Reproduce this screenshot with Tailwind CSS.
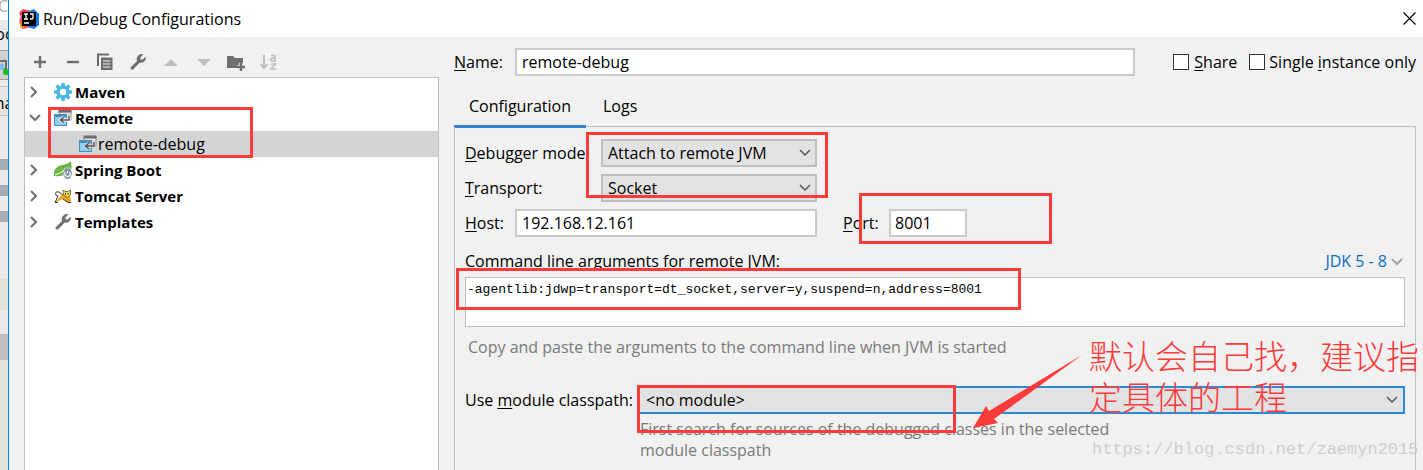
<!DOCTYPE html>
<html lang="en">
<head>
    <meta charset="UTF-8">
    <meta name="viewport" content="width=device-width, initial-scale=1.0">
    <script src="https://cdn.jsdelivr.net/npm/@tailwindcss/browser@4"></script>
    <title>Run/Debug Configurations</title>
</head>
<body class="relative flex min-h-screen overflow-hidden bg-[#f1f1f1] font-['Open_Sans','Noto_Sans_CJK_SC',sans-serif] text-base leading-6 text-black">

    <!-- Strip of the IDE window behind the dialog -->
    <div class="flex w-2 shrink-0 flex-col overflow-hidden bg-[#ece9e8]" aria-hidden="true">
        <div class="flex h-5 justify-end bg-white leading-3 text-[#aaaaaa]">C</div>
        <div class="flex h-[30px] justify-center bg-[#e9e9e9] pt-[2px]">oc</div>
        <div class="h-[30px] border-y border-[#a0a0a0] bg-[#d0d0d0] pt-2">
            <svg class="h-4 w-2" viewBox="0 0 8 16"><path d="M0 2h6v8H0" fill="none" stroke="#6e6e6e" stroke-width="2"/><rect y="5" width="4" height="6" fill="#7fc1e6"/><circle cx="6" cy="13" r="3" fill="#12c312"/></svg>
        </div>
        <div class="mt-[6px] flex h-[30px] justify-center border-y border-[#c0c0c0] bg-[#e4e4e4] pt-[4px]">na</div>
        <div class="mt-[43px] h-[11px] bg-[#a3adb3]"></div>
        <div class="mt-[15px] h-[11px] bg-[#a3adb3]"></div>
        <div class="mt-[15px] h-[11px] bg-[#a3adb3]"></div>
        <div class="mt-[56px] h-8 bg-[#dfe2d6]"></div>
        <div class="mt-[24px] h-[26px] bg-[#c3bdc1]"></div>
        <div class="grow bg-[#e0e4d8]"></div>
    </div>

    <!-- Dialog -->
    <div class="flex min-w-0 flex-1 flex-col border-l border-[#0a84e0]">

        <!-- Title bar -->
        <header class="flex h-[37px] shrink-0 items-center bg-white pl-[10px] pr-[7px]">
            <svg class="mr-[4px] h-5 w-5" viewBox="0 0 20 20">
                <path d="M0 4l4-4 8 2v16l-9 2 1-6-4-2 2-4z" fill="#fc3f5c"/>
                <path d="M0 13l6-5v12l-4-1z" fill="#fd8224"/>
                <path d="M10 2l5-2 5 5v11l-5 4-6-2z" fill="#1379f2"/>
                <rect x="3" y="3" width="14" height="14" fill="#000"/>
                <path d="M5 5h4M7 5v5M5 10h4M11 5h3v4q0 1-1 1h-2M5 14h5" fill="none" stroke="#fff" stroke-width="1.3"/>
            </svg>
            <h1 class="flex-1">Run/Debug Configurations</h1>
            <button type="button" aria-label="Close"><svg class="h-[13px] w-[13px]" viewBox="0 0 13 13"><path d="M0.5 0.5l12 12M12.5 0.5l-12 12" stroke="#000" stroke-width="1.2"/></svg></button>
        </header>

        <div class="flex min-h-0 flex-1">

            <!-- Configurations list -->
            <aside class="ml-[15px] flex w-[415px] shrink-0 flex-col">
                <div class="flex h-10 items-center justify-between pl-[7px] pr-[161px] pt-[10px]">
                    <button type="button" aria-label="Add"><svg class="h-[18px] w-[18px]" viewBox="0 0 18 18"><path d="M9 3v12M3 9h12" stroke="#6e6e6e" stroke-width="2.4"/></svg></button>
                    <button type="button" aria-label="Remove"><svg class="h-[18px] w-[18px]" viewBox="0 0 18 18"><path d="M3 9h12" stroke="#6e6e6e" stroke-width="2.4"/></svg></button>
                    <button type="button" aria-label="Copy"><svg class="h-[18px] w-[18px]" viewBox="0 0 18 18"><path d="M2 13V1.500h11" fill="none" stroke="#6e6e6e" stroke-width="2"/><path d="M5 4.500h11.500V17H5z" fill="#6e6e6e"/><path d="M7 8h7.500M7 11h7.500M7 14h7.500" stroke="#f1f1f1" stroke-width="1"/></svg></button>
                    <button type="button" aria-label="Edit templates"><svg class="h-[18px] w-[18px]" viewBox="0 0 18 18"><path d="M1 15L8 8Q7 4 10 2Q12 0.500 14.500 1.300L11.500 4.300V6.500H13.700L16.700 3.500Q17.500 6 15.500 8.200Q13.300 10 10.500 9.700L3.500 17Z" fill="#6e6e6e"/></svg></button>
                    <button type="button" aria-label="Move up" disabled><svg class="h-[18px] w-[18px]" viewBox="0 0 18 18"><path d="M2 13l7-7 7 7z" fill="#bfbfbf"/></svg></button>
                    <button type="button" aria-label="Move down" disabled><svg class="h-[18px] w-[18px]" viewBox="0 0 18 18"><path d="M2 6l7 7 7-7z" fill="#bfbfbf"/></svg></button>
                    <button type="button" aria-label="Create folder"><svg class="h-[18px] w-[18px]" viewBox="0 0 18 18"><path d="M0 3h6l2 2h8v5h-4v2H10v3H0z" fill="#6e6e6e"/><path d="M14 10v8M10 14h8" stroke="#6e6e6e" stroke-width="2.4"/></svg></button>
                    <button type="button" aria-label="Sort" disabled><svg class="h-[18px] w-[18px]" viewBox="0 0 18 18"><path d="M4 2v13M0.500 11L4 15l3.500-4" fill="none" stroke="#bfbfbf" stroke-width="2"/><path d="M11 2.500h3q1 0 1 1V8h-3q-1.500 0-1.500-1.300T12 5.300h3M11 11h4.500L11 16h5" fill="none" stroke="#bfbfbf" stroke-width="1.600"/></svg></button>
                </div>

                <ul class="flex-1 border border-b-0 border-[#bfbfbf] bg-white pt-px text-[15px] font-bold">
                    <li class="flex h-[26px] items-center pl-[4px]">
                        <svg class="mr-[13px] h-3 w-3" viewBox="0 0 12 12"><path d="M2 1l5 5-5 5" fill="none" stroke="#6e6e6e" stroke-width="2"/></svg>
                        <svg class="mr-[3px] h-[18px] w-[18px]" viewBox="0 0 18 18"><path d="M9 0v18M0 9h18M2.600 2.600l12.800 12.800M15.400 2.600L2.600 15.400" stroke="#4fb8e3" stroke-width="3.600"/><circle cx="9" cy="9" r="5" fill="#fff" stroke="#4fb8e3" stroke-width="3.600"/></svg>
                        Maven
                    </li>
                    <li class="flex h-[26px] items-center pl-[4px]">
                        <svg class="mr-[13px] h-3 w-3" viewBox="0 0 12 12"><path d="M1 3l5 5 5-5" fill="none" stroke="#6e6e6e" stroke-width="2"/></svg>
                        <svg class="mr-[3px] h-[18px] w-[18px]" viewBox="0 0 18 18"><path d="M5 6V2h12v9h-3" fill="#ddd" stroke="#8a8a8a"/><path d="M4.500 2h13" stroke="#6e6e6e" stroke-width="3"/><rect x="0.500" y="5.500" width="12" height="11" fill="#8ccdf2" stroke="#4a8fb8"/><path d="M0 6.500h13" stroke="#4a8fb8" stroke-width="3"/><path d="M15 7v4H7M10 8l-3.500 3L10 14" fill="none" stroke="#fff" stroke-width="3"/><path d="M15 7v4H7M10 8l-3.500 3L10 14" fill="none" stroke="#555" stroke-width="1.500"/></svg>
                        Remote
                    </li>
                    <li class="flex h-[26px] items-center bg-[#d4d4d4] pl-[54px] text-base font-normal">
                        <svg class="mr-px h-[18px] w-[18px]" viewBox="0 0 18 18"><path d="M5 6V2h12v9h-3" fill="#ddd" stroke="#8a8a8a"/><path d="M4.500 2h13" stroke="#6e6e6e" stroke-width="3"/><rect x="0.500" y="5.500" width="12" height="11" fill="#8ccdf2" stroke="#4a8fb8"/><path d="M0 6.500h13" stroke="#4a8fb8" stroke-width="3"/><path d="M15 7v4H7M10 8l-3.500 3L10 14" fill="none" stroke="#d4d4d4" stroke-width="3"/><path d="M15 7v4H7M10 8l-3.500 3L10 14" fill="none" stroke="#555" stroke-width="1.500"/></svg>
                        remote-debug
                    </li>
                    <li class="flex h-[26px] items-center pl-[4px]">
                        <svg class="mr-[13px] h-3 w-3" viewBox="0 0 12 12"><path d="M2 1l5 5-5 5" fill="none" stroke="#6e6e6e" stroke-width="2"/></svg>
                        <svg class="mr-[3px] h-[18px] w-[18px]" viewBox="0 0 18 18"><path d="M0 15Q-1 6 8 4Q14 3.500 16.500 0Q20 9 13 13Q7 16 0 15z" fill="#6cb644"/><path d="M1 14Q7 12 10 9" stroke="#fff" fill="none"/><path d="M11 7h5l2.500 5.200L16 18h-5l-2.500-5.800z" fill="#7d8f9b" stroke="#fff" stroke-width="0.600"/><path d="M13.500 9.500v3M11.500 11a2.700 2.700 0 1 0 4 0" fill="none" stroke="#fff" stroke-width="1.200"/></svg>
                        Spring Boot
                    </li>
                    <li class="flex h-[26px] items-center pl-[4px]">
                        <svg class="mr-[13px] h-3 w-3" viewBox="0 0 12 12"><path d="M2 1l5 5-5 5" fill="none" stroke="#6e6e6e" stroke-width="2"/></svg>
                        <svg class="mr-[3px] h-[18px] w-[18px]" viewBox="0 0 18 18"><path d="M8 8l3-1 5 1 1 8h-3l-4-4-4 1-4 3H1l4-5z" fill="#e8a51c"/><path d="M9 3l2 1.500h3L16.500 3v5l-3 2.500L9.500 8z" fill="#f0d95a" stroke="#6a5a20" stroke-width="0.800"/><path d="M9 8L5 5Q1.500 4 1.500 6.500T4 9l-3 6.500h3M9 12l5 3.500h3" fill="none" stroke="#3c3828" stroke-width="1"/><path d="M11.500 6v1.500M14 6v1.500" stroke="#222"/></svg>
                        Tomcat Server
                    </li>
                    <li class="flex h-[26px] items-center pl-[4px]">
                        <svg class="mr-[13px] h-3 w-3" viewBox="0 0 12 12"><path d="M2 1l5 5-5 5" fill="none" stroke="#6e6e6e" stroke-width="2"/></svg>
                        <svg class="mr-[3px] h-[18px] w-[18px]" viewBox="0 0 18 18"><path d="M1 15L8 8Q7 4 10 2Q12 0.500 14.500 1.300L11.500 4.300V6.500H13.700L16.700 3.500Q17.500 6 15.500 8.200Q13.300 10 10.500 9.700L3.500 17Z" fill="#6e6e6e"/></svg>
                        Templates
                    </li>
                </ul>
            </aside>

            <!-- Selected configuration -->
            <main class="ml-[15px] mr-[7px] flex min-w-0 flex-1 flex-col whitespace-nowrap">
                <div class="mt-[11px] flex h-7 items-center">
                    <label for="name" class="w-[61px] shrink-0"><u class="underline-offset-2">N</u>ame:</label>
                    <input id="name" type="text" value="remote-debug" class="h-7 min-w-0 flex-1 border-2 border-[#cacaca] bg-white px-[5px]">
                    <label class="ml-[38px] flex items-center gap-[5px]"><input type="checkbox" class="h-4 w-4 appearance-none border border-[#333333] bg-white"><span><u class="underline-offset-2">S</u>hare</span></label>
                    <label class="ml-3 flex items-center gap-[4px]"><input type="checkbox" class="h-4 w-4 appearance-none border border-[#333333] bg-white"><span>Single <u class="underline-offset-2">i</u>nstance only</span></label>
                </div>

                <div class="mt-[15px] flex h-9 border-b border-[#bfbfbf]">
                    <button type="button" class="h-[37px] w-[132px] border-b-3 border-[#3880d0] pb-[4px]">Configuration</button>
                    <button type="button" class="px-[17px] pb-[6px]">Logs</button>
                </div>

                <div class="flex flex-1 flex-col border-x border-[#bfbfbf] pl-[10px] pr-[10px] pt-3">
                    <div class="flex flex-col gap-[7px]">
                        <div class="flex items-center">
                            <label for="mode" class="w-[136px]"><u class="underline-offset-2">D</u>ebugger mode:</label>
                            <div class="grid w-[216px] items-center">
                                <select id="mode" class="col-start-1 row-start-1 h-7 appearance-none border-2 border-[#bfbfbf] bg-[#e2e2e2] px-[5px]"><option>Attach to remote JVM</option></select>
                                <svg class="pointer-events-none col-start-1 row-start-1 mr-[6px] h-3 w-3 justify-self-end" viewBox="0 0 12 12"><path d="M1 3l5 5 5-5" fill="none" stroke="#555" stroke-width="1.500"/></svg>
                            </div>
                        </div>
                        <div class="flex items-center">
                            <label for="transport" class="w-[136px]"><u class="underline-offset-2">T</u>ransport:</label>
                            <div class="grid w-[216px] items-center">
                                <select id="transport" class="col-start-1 row-start-1 h-7 appearance-none border-2 border-[#bfbfbf] bg-[#e2e2e2] px-[5px]"><option>Socket</option></select>
                                <svg class="pointer-events-none col-start-1 row-start-1 mr-[6px] h-3 w-3 justify-self-end" viewBox="0 0 12 12"><path d="M1 3l5 5 5-5" fill="none" stroke="#555" stroke-width="1.500"/></svg>
                            </div>
                        </div>
                        <div class="flex items-center">
                            <label for="host" class="w-[50px]"><u class="underline-offset-2">H</u>ost:</label>
                            <input id="host" type="text" value="192.168.12.161" class="h-7 w-[302px] border-2 border-[#cacaca] bg-white px-[5px]">
                            <label for="port" class="ml-[26px] w-[46px]"><u class="underline-offset-2">P</u>ort:</label>
                            <input id="port" type="text" value="8001" class="h-7 w-[78px] border-2 border-[#cacaca] bg-white px-[4px]">
                        </div>
                    </div>

                    <div class="mt-3 flex items-center justify-between">
                        <label for="args">Command line arguments for remote JVM:</label>
                        <button type="button" class="flex items-center gap-[4px] pr-[2px] text-[#0a6cc4]">JDK 5 - 8
                            <svg class="h-3 w-3" viewBox="0 0 12 12"><path d="M1 4l5 5 5-5" fill="none" stroke="#9aa7b0" stroke-width="2"/></svg>
                        </button>
                    </div>
                    <textarea id="args" class="mt-1 h-[50px] resize-none border border-[#bfbfbf] bg-white px-px font-['Liberation_Mono',monospace] text-[13px] leading-6">-agentlib:jdwp=transport=dt_socket,server=y,suspend=n,address=8001</textarea>
                    <p class="mt-2 pl-[3px] text-[#7a7a7a]">Copy and paste the arguments to the command line when JVM is started</p>

                    <div class="mt-[27px] flex items-center">
                        <label for="module" class="w-[173px] shrink-0">Use <u class="underline-offset-2">m</u>odule classpath:</label>
                        <div class="grid flex-1 items-center">
                            <select id="module" class="col-start-1 row-start-1 h-7 appearance-none border-2 border-[#2b8ad8] bg-[#e2e2e2] px-[6px]"><option>&lt;no module&gt;</option></select>
                            <svg class="pointer-events-none col-start-1 row-start-1 mr-[7px] h-3 w-3 justify-self-end" viewBox="0 0 12 12"><path d="M1 3l5 5 5-5" fill="none" stroke="#555" stroke-width="1.500"/></svg>
                        </div>
                    </div>
                    <p class="mt-[5px] pl-[175px] leading-[21px] text-[#7a7a7a]">First search for sources of the debugged classes in the selected<br>module classpath</p>
                </div>
            </main>
        </div>
    </div>

    <!-- Red annotations drawn over the dialog -->
    <div class="pointer-events-none absolute left-[48px] top-[107px] h-[51px] w-[205px] border-3 border-[#fb3a3a]"></div>
    <div class="pointer-events-none absolute left-[586px] top-[132px] h-[66px] w-[242px] border-3 border-[#fb3a3a]"></div>
    <div class="pointer-events-none absolute left-[859px] top-[193px] h-[51px] w-[193px] border-3 border-[#fb3a3a]"></div>
    <div class="pointer-events-none absolute left-[456px] top-[268px] h-[42px] w-[565px] border-3 border-[#fb3a3a]"></div>
    <div class="pointer-events-none absolute left-[637px] top-[385px] h-[48px] w-[319px] border-3 border-[#fb3a3a]"></div>
    <svg class="pointer-events-none absolute left-[972px] top-[354px] h-[76px] w-[112px]" viewBox="0 0 112 76"><path d="M110 1L22 65l4 4L1 74l13-22 3 5z" fill="#fb3a3a"/></svg>
    <p class="pointer-events-none absolute left-[1089px] top-[335px] whitespace-nowrap font-['Noto_Sans_CJK_SC',sans-serif] text-[33px] font-light leading-[41px] text-[#fb3a3a]">默认会自己找，建议指<br>定具体的工程</p>
    <p class="pointer-events-none absolute left-[1092px] top-[438px] whitespace-nowrap font-['Liberation_Mono',monospace] text-[17px] text-[#cfcfcb]">https://blog.csdn.net/zaemyn2015</p>
</body>
</html>
